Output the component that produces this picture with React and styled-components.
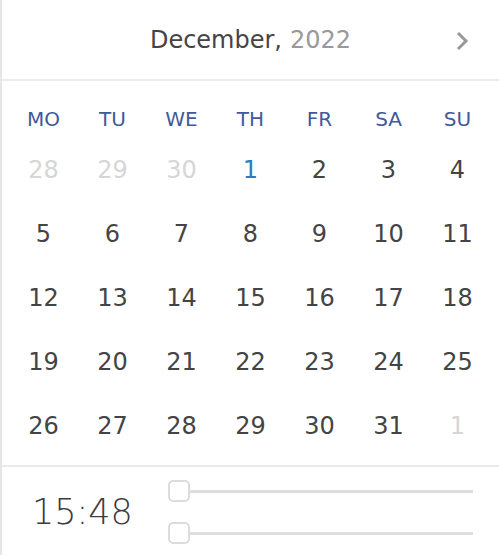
import styled, { createGlobalStyle } from "styled-components";

const GlobalStyle = createGlobalStyle`
  html, body {
    margin: 0;
    padding: 0;
    background: #fff;
  }
  body {
    font-family: "DejaVu Sans", Verdana, sans-serif;
  }
`;

const weekdays = ["MO", "TU", "WE", "TH", "FR", "SA", "SU"];

const days = [
  { n: 28, muted: true },
  { n: 29, muted: true },
  { n: 30, muted: true },
  { n: 1, today: true },
  ...Array.from({ length: 30 }, (_, i) => ({ n: i + 2 })),
  { n: 1, muted: true },
];

const Picker = styled.div`
  width: 499px;
  height: 555px;
  box-sizing: border-box;
  border-left: 2px solid #e6e6e6;
  display: flex;
  flex-direction: column;
  overflow: hidden;
`;

const Header = styled.div`
  height: 79px;
  flex-shrink: 0;
  border-bottom: 2px solid #ebebeb;
  display: flex;
  align-items: center;
  justify-content: center;
  position: relative;
  font-size: 24px;
`;

const Month = styled.span`
  color: #444;
  margin-right: 8px;
`;

const Year = styled.span`
  color: #999;
`;

const NextButton = styled.button`
  position: absolute;
  right: 26px;
  top: 30px;
  border: none;
  background: none;
  padding: 0;
  width: 20px;
  height: 22px;
  cursor: pointer;
`;

const Grid = styled.div`
  display: grid;
  grid-template-columns: repeat(7, 69px);
  grid-auto-rows: 64px;
  padding: 6px 5px 0 7px;
  height: 378px;
  flex-shrink: 0;
`;

const Weekday = styled.div`
  display: flex;
  align-items: center;
  justify-content: center;
  font-size: 20px;
  color: #3f5a9b;
  height: 52px;
  margin-top: 6px;
  align-self: start;
`;

const Day = styled.div`
  display: flex;
  align-items: center;
  justify-content: center;
  font-size: 24px;
  color: ${(p) => (p.$muted ? "#d6d6d6" : p.$today ? "#2b7bbf" : "#444")};
  margin-top: -26px;
`;

const Footer = styled.div`
  border-top: 2px solid #ebebeb;
  flex: 1;
  display: flex;
  align-items: center;
  padding-left: 30px;
`;

const Time = styled.div`
  width: 136px;
  flex-shrink: 0;
  font-family: "DejaVu Sans", sans-serif;
  font-weight: 200;
  font-size: 35px;
  color: #3c3c3c;
  padding-top: 2px;
`;

const Sliders = styled.div`
  flex: 1;
  display: flex;
  flex-direction: column;
  gap: 20px;
  padding-right: 26px;
  padding-top: 2px;
`;

const Slider = styled.div`
  display: flex;
  align-items: center;
  height: 22px;
`;

const Thumb = styled.div`
  width: 18px;
  height: 18px;
  border: 2px solid #dcdcdc;
  border-radius: 5px;
  background: #fff;
`;

const Track = styled.div`
  flex: 1;
  height: 3px;
  background: #dedede;
`;

const App = () => {
  return (
    <>
      <GlobalStyle />
      <Picker>
        <Header>
          <Month>December,</Month>
          <Year>2022</Year>
          <NextButton aria-label="Next month">
            <svg width="20" height="22" viewBox="0 0 20 22">
              <path
                d="M5 3 L13 11 L5 19"
                fill="none"
                stroke="#999"
                strokeWidth="3"
              />
            </svg>
          </NextButton>
        </Header>
        <Grid>
          {weekdays.map((w) => (
            <Weekday key={w}>{w}</Weekday>
          ))}
          {days.map((d, i) => (
            <Day key={i} $muted={d.muted} $today={d.today}>
              {d.n}
            </Day>
          ))}
        </Grid>
        <Footer>
          <Time>15:48</Time>
          <Sliders>
            <Slider>
              <Thumb />
              <Track />
            </Slider>
            <Slider>
              <Thumb />
              <Track />
            </Slider>
          </Sliders>
        </Footer>
      </Picker>
    </>
  );
};

export default App;
